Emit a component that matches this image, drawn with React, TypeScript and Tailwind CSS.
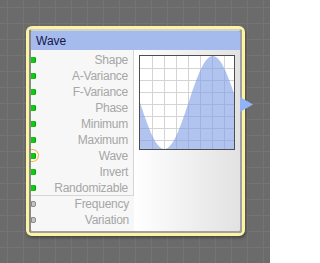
import React from 'react';

const inputs = [
  { label: 'Shape', kind: 'on' },
  { label: 'A-Variance', kind: 'on' },
  { label: 'F-Variance', kind: 'on' },
  { label: 'Phase', kind: 'on' },
  { label: 'Minimum', kind: 'on' },
  { label: 'Maximum', kind: 'on' },
  { label: 'Wave', kind: 'hot' },
  { label: 'Invert', kind: 'on' },
  { label: 'Randomizable', kind: 'on' },
];

const extras = ['Frequency', 'Variation'];

function Pin({ kind }: { kind: string }) {
  if (kind === 'off') {
    return <span className="absolute left-0 top-[5px] h-[6px] w-[5px] rounded-r-[2px] border border-[#8c8c8c] bg-[#c4c4c4]" />;
  }
  return (
    <>
      {kind === 'hot' && (
        <span className="absolute left-[-1px] top-[1px] h-[13px] w-[9px] rounded-r-full border border-l-0 border-[#f0b43c]" />
      )}
      <span className="absolute left-0 top-[5px] h-[6px] w-[5px] rounded-r-[2px] bg-[#0ccc0c] shadow-[inset_-1px_0_0_#0a9a0a]" />
    </>
  );
}

function Row({ label, kind, last }: { label: string; kind: string; last?: boolean }) {
  return (
    <div className={`relative flex h-[16px] items-center justify-end pr-[5px] ${last ? 'border-b border-[#d6d6d6]' : ''}`}>
      <Pin kind={kind} />
      <span className="text-[12px] leading-none tracking-[-0.25px] text-[#a6a6a6]">{label}</span>
    </div>
  );
}

function WaveChart() {
  const w = 94;
  const h = 93;
  const mid = h / 2;
  const amp = h / 2;
  const pts: string[] = [];
  for (let x = 0; x <= w; x += 1) {
    const y = mid + amp * Math.sin((2 * Math.PI * x) / 97);
    pts.push(`${x},${y.toFixed(2)}`);
  }
  const area = `M0,${h} L${pts.join(' L')} L${w},${h} Z`;
  const lines = [12, 24, 36, 48, 60, 72, 84];
  return (
    <svg width={96} height={95} viewBox="-1 -1 96 95" className="block">
      <rect x={-0.5} y={-0.5} width={w + 1} height={h + 1} fill="#ffffff" stroke="#4e4e4e" strokeWidth={1} />
      {lines.map((l) => (
        <g key={l}>
          <line x1={l + 0.5} y1={0} x2={l + 0.5} y2={h} stroke="#d4d4d4" strokeWidth={1} />
          <line x1={0} y1={l + 0.5} x2={w} y2={l + 0.5} stroke="#d4d4d4" strokeWidth={1} />
        </g>
      ))}
      <path d={area} fill="#7d9ce6" fillOpacity={0.6} />
    </svg>
  );
}

export default function App() {
  return (
    <div className="relative h-[263px] w-[270px] overflow-hidden bg-[#6b6b6b] bg-[linear-gradient(to_right,#747474_1px,transparent_1px),linear-gradient(to_bottom,#747474_1px,transparent_1px)] bg-size-[16px_16px] bg-position-[7px_7px] font-['Liberation_Sans',Arial,sans-serif]">
      <div className="absolute left-[26px] top-[26px] w-[219px] rounded-[6px] border-[3px] border-[#fbf4a0] shadow-[1px_2px_3px_rgba(0,0,0,0.35)]">
        <div className="overflow-hidden rounded-[3px] border-2 border-[#a0a0a0] border-t-[#d2d2d2] border-l-[#8a8a8a]">
          <div className="flex h-[19px] items-center bg-[#a5bbee] pl-[5px]">
            <span className="text-[12px] leading-none text-[#15154a]">Wave</span>
          </div>
          <div className="flex h-[181px]">
            <div className="w-[103px] bg-[#f7f7f7]">
              <div className="border-r border-[#d6d6d6] pt-[2px]">
                {inputs.map((r, i) => (
                  <Row key={r.label} label={r.label} kind={r.kind} last={i === inputs.length - 1} />
                ))}
              </div>
              {extras.map((e) => (
                <Row key={e} label={e} kind="off" />
              ))}
            </div>
            <div className="flex-1 bg-gradient-to-r from-white to-[#e2e2e2] pl-[5px] pt-[5px]">
              <WaveChart />
            </div>
          </div>
        </div>
        <svg className="absolute left-[211px] top-[68px]" width={14} height={15} viewBox="0 0 14 15">
          <polygon points="0,0 13,7.5 0,15" fill="#92b4f4" />
        </svg>
      </div>
    </div>
  );
}
